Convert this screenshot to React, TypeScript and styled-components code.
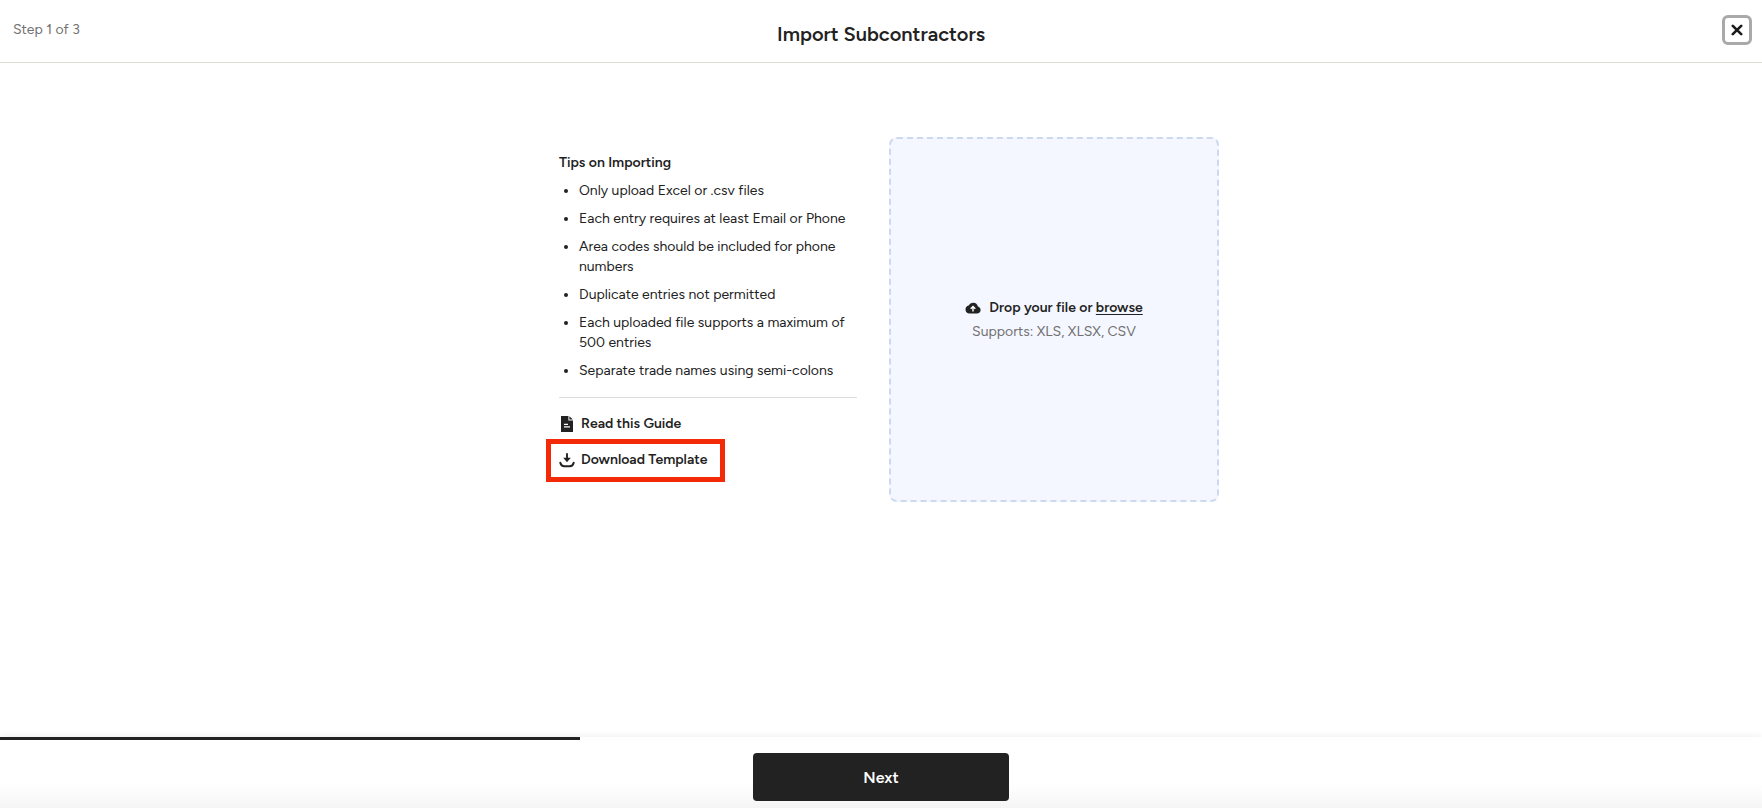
import React from "react";
import styled, { createGlobalStyle } from "styled-components";

const ink = "#222222";
const muted = "#717171";

const GlobalStyle = createGlobalStyle`
  *, *::before, *::after { box-sizing: border-box; }
  body {
    margin: 0;
    background: #ffffff;
    color: ${ink};
    font-family: Figtree, Inter, "Liberation Sans", sans-serif;
    font-size: 14px;
    line-height: 20px;
  }
`;

const Page = styled.div`
  display: flex;
  flex-direction: column;
  min-height: 100vh;
`;

const Header = styled.header`
  display: grid;
  grid-template-columns: 1fr auto 1fr;
  align-items: start;
  padding: 15px 10px 14px;
  border-bottom: 1px solid #dcdcd6;
`;

const Step = styled.span`
  padding: 5px 3px 0;
  color: ${muted};
`;

const Title = styled.h1`
  margin: 0;
  padding-top: 5px;
  font-size: 20px;
  font-weight: 600;
  line-height: 28px;
`;

const CloseButton = styled.button`
  display: flex;
  align-items: center;
  justify-content: center;
  justify-self: end;
  width: 30px;
  height: 30px;
  padding: 0;
  border: 3px solid #a9a9a9;
  border-radius: 6px;
  background: #ffffff;
  color: #1a1a1a;
`;

const Main = styled.main`
  display: grid;
  flex: 1;
  grid-template-columns: repeat(2, minmax(0, 330px));
  gap: 16px;
  align-content: start;
  justify-content: center;
  padding: 74px 16px;
`;

const Tips = styled.section`
  padding: 16px;
`;

const TipsTitle = styled.h2`
  margin: 0;
  font-size: 14px;
  font-weight: 600;
  line-height: 20px;
`;

const TipList = styled.ul`
  display: flex;
  flex-direction: column;
  gap: 8px;
  margin: 8px 0 16px;
  padding-left: 20px;
`;

const LinkList = styled.nav`
  display: flex;
  flex-direction: column;
  align-items: flex-start;
  gap: 16px;
  padding-top: 16px;
  border-top: 1px solid #dddddd;
`;

const ResourceLink = styled.a<{ $highlighted?: boolean }>`
  position: relative;
  display: flex;
  align-items: center;
  gap: 6px;
  color: inherit;
  font-weight: 600;
  text-decoration: none;

  &::after {
    content: "";
    display: ${({ $highlighted }) => ($highlighted ? "block" : "none")};
    position: absolute;
    inset: -11px -18px -12px -13px;
    border: 5px solid #f22a08;
  }
`;

const DropZone = styled.section`
  display: flex;
  flex-direction: column;
  align-items: center;
  justify-content: center;
  gap: 4px;
  min-height: 365px;
  border: 2px dashed #ccd9ee;
  border-radius: 8px;
  background: #f4f7ff;
`;

const DropPrompt = styled.div`
  display: flex;
  align-items: center;
  gap: 8px;
  font-weight: 600;
`;

const BrowseButton = styled.button`
  padding: 0;
  border: 0;
  background: none;
  color: inherit;
  font: inherit;
  text-decoration: underline;
  text-underline-offset: 2px;
`;

const Formats = styled.span`
  color: ${muted};
`;

const Footer = styled.footer`
  display: flex;
  flex-direction: column;
  align-items: center;
  background: linear-gradient(#ffffff 66%, #f5f5f5);
  box-shadow: 0 0 8px rgba(0, 0, 0, 0.08);
`;

const Progress = styled.div`
  align-self: stretch;
  height: 3px;
`;

const ProgressFill = styled.div`
  height: 100%;
  background: ${ink};
`;

const NextButton = styled.button`
  width: 256px;
  height: 48px;
  margin: 13px 0 7px;
  border: 0;
  border-radius: 4px;
  background: ${ink};
  color: #ffffff;
  font-family: inherit;
  font-size: 16px;
  font-weight: 600;
`;

const tips = [
  "Only upload Excel or .csv files",
  "Each entry requires at least Email or Phone",
  "Area codes should be included for phone numbers",
  "Duplicate entries not permitted",
  "Each uploaded file supports a maximum of 500 entries",
  "Separate trade names using semi-colons",
];

const CloseIcon = () => (
  <svg width="12" height="12" viewBox="0 0 12 12" fill="none" stroke="currentColor" strokeWidth="2.6" strokeLinecap="round" aria-hidden="true">
    <path d="M1.8 1.8l8.4 8.4M10.2 1.8L1.8 10.2" />
  </svg>
);

const GuideIcon = () => (
  <svg width="16" height="16" viewBox="0 0 16 16" aria-hidden="true">
    <path fill={ink} d="M2 0h7.4v4.6H14V16H2z" />
    <path fill={ink} d="M10.4.2L13.8 3.6h-3.4z" />
    <path stroke="#fff" strokeWidth="1.2" d="M5 8.4h4M5 10.9h6" />
  </svg>
);

const DownloadIcon = () => (
  <svg width="16" height="16" viewBox="0 0 16 16" fill="none" aria-hidden="true">
    <path stroke={ink} strokeWidth="1.9" d="M8 1.2v6" />
    <path fill={ink} d="M4.2 5.8h7.6L8 10.2z" />
    <path stroke={ink} strokeWidth="2" strokeLinecap="round" d="M1.3 10.8c.5 2.2 2 3.400 4 3.400h5.400c2 0 3.500-1.200 4-3.400" />
  </svg>
);

const CloudIcon = () => (
  <svg width="16" height="16" viewBox="0 0 16 16" aria-hidden="true">
    <path fill={ink} d="M12.9 6.4A5 5 0 0 0 3.6 5.6 4.1 4.1 0 0 0 .5 9.6C.5 12 2.3 13.6 4.6 13.6h7.4c2 0 3.6-1.5 3.6-3.6 0-1.9-1.2-3.3-2.7-3.6z" />
    <path stroke="#fff" strokeWidth="1.4" fill="none" d="M8 11.4V6.9M5.7 8.7L8 6.4l2.3 2.3" />
  </svg>
);

export default function App() {
  return (
    <Page>
      <GlobalStyle />
      <Header>
        <Step>Step 1 of 3</Step>
        <Title>Import Subcontractors</Title>
        <CloseButton type="button" aria-label="Close">
          <CloseIcon />
        </CloseButton>
      </Header>
      <Main>
        <Tips>
          <TipsTitle>Tips on Importing</TipsTitle>
          <TipList>
            {tips.map((tip) => (
              <li key={tip}>{tip}</li>
            ))}
          </TipList>
          <LinkList aria-label="Import resources">
            <ResourceLink href="#guide">
              <GuideIcon />
              Read this Guide
            </ResourceLink>
            <ResourceLink href="#template" $highlighted>
              <DownloadIcon />
              Download Template
            </ResourceLink>
          </LinkList>
        </Tips>
        <DropZone>
          <DropPrompt>
            <CloudIcon />
            <span>
              Drop your file or <BrowseButton type="button">browse</BrowseButton>
            </span>
          </DropPrompt>
          <Formats>Supports: XLS, XLSX, CSV</Formats>
        </DropZone>
      </Main>
      <Footer>
        <Progress role="progressbar" aria-label="Import progress" aria-valuemin={0} aria-valuemax={3} aria-valuenow={1}>
          <ProgressFill style={{ width: "32.9%" }} />
        </Progress>
        <NextButton type="button">Next</NextButton>
      </Footer>
    </Page>
  );
}
